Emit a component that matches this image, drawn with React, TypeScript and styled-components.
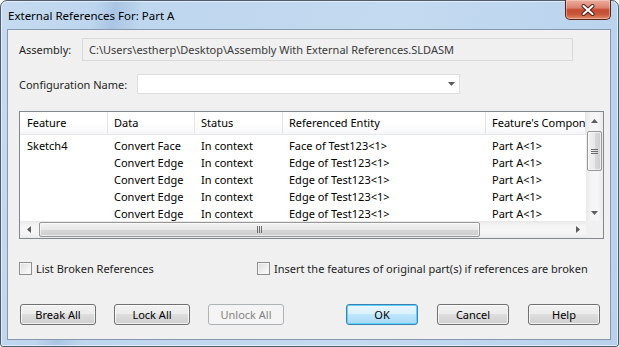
import styled, { createGlobalStyle } from 'styled-components'

const GlobalStyle = createGlobalStyle`
  html, body {
    margin: 0;
    padding: 0;
    background: #ffffff;
  }
  body {
    font-family: 'Segoe UI', 'Noto Sans', sans-serif;
    font-size: 11px;
    color: #000000;
  }
  * {
    box-sizing: border-box;
  }
`

const Window = styled.div`
  width: 619px;
  height: 347px;
  display: flex;
  flex-direction: column;
  padding: 0 7px 6px 6px;
  border: 1px solid #4f5d6e;
  border-radius: 7px 7px 3px 3px;
  background: linear-gradient(100deg, #c6dbf1 0%, #bdd5ee 14%, #a9c5e4 17%, #bed6ee 21%, #c3daf0 60%, #b8d2ed 100%);
  box-shadow: inset 0 0 0 1px rgba(255, 255, 255, 0.55);
`

const TitleBar = styled.div`
  height: 28px;
  display: flex;
  justify-content: space-between;
  align-items: flex-start;
`

const Title = styled.div`
  padding: 7px 0 0 1px;
  line-height: 16px;
  font-size: 11.5px;
  color: #000000;
`

const CloseButton = styled.div`
  width: 46px;
  height: 20px;
  margin-top: -1px;
  display: flex;
  align-items: center;
  justify-content: center;
  border: 1px solid #5e2218;
  border-top: none;
  border-radius: 0 0 5px 5px;
  background: linear-gradient(180deg, #ebae9f 0%, #dc8470 40%, #c54a31 52%, #c85639 75%, #dd8c6b 100%);
  box-shadow: inset 0 0 0 1px rgba(255, 220, 210, 0.45);
`

const Client = styled.div`
  flex: 1;
  display: flex;
  flex-direction: column;
  padding: 8px 10px 0 11px;
  background: #f0f0f0;
  border: 1px solid #8797ad;
`

const FieldRow = styled.div<{ $gap: number; $height: number }>`
  display: flex;
  align-items: center;
  height: ${p => p.$height}px;
  margin-top: ${p => p.$gap}px;
`

const Label = styled.div<{ $w: number }>`
  width: ${p => p.$w}px;
  flex: none;
  color: #1e1e1e;
  white-space: nowrap;
`

const ReadOnlyField = styled.div`
  width: 491px;
  height: 23px;
  padding-left: 6px;
  display: flex;
  align-items: center;
  background: #f0f0f0;
  border: 1px solid #d9d9d9;
  color: #3a3a3a;
  white-space: nowrap;
`

const Combo = styled.div`
  width: 323px;
  height: 20px;
  display: flex;
  align-items: center;
  justify-content: flex-end;
  padding-right: 4px;
  background: #ffffff;
  border: 1px solid #dedede;
`

const ListView = styled.div`
  margin-top: 17px;
  width: 585px;
  height: 128px;
  display: grid;
  grid-template-columns: 1fr 17px;
  grid-template-rows: 1fr 17px;
  background: #ffffff;
  border: 1px solid #828790;
`

const Table = styled.div`
  overflow: hidden;
  min-width: 0;
`

const columns = '88px 87px 88px 203px 1fr'

const HeaderRow = styled.div`
  display: grid;
  grid-template-columns: ${columns};
  height: 23px;
  background: linear-gradient(180deg, #ffffff 0%, #ffffff 45%, #f6f7f9 100%);
  border-bottom: 1px solid #e6e8eb;
`

const HeaderCell = styled.div`
  padding-left: 6px;
  line-height: 22px;
  white-space: nowrap;
  overflow: hidden;
  border-right: 1px solid #e3e5e8;
  &:first-child {
    padding-left: 7px;
  }
`

const Body = styled.div`
  padding-top: 2px;
`

const Row = styled.div`
  display: grid;
  grid-template-columns: ${columns};
  height: 17px;
`

const Cell = styled.div`
  padding-left: 6px;
  line-height: 17px;
  white-space: nowrap;
  overflow: hidden;
  &:first-child {
    padding-left: 7px;
  }
`

const VScroll = styled.div`
  display: flex;
  flex-direction: column;
  background: linear-gradient(90deg, #e9e9e9 0%, #f5f5f5 30%, #f5f5f5 70%, #ebebeb 100%);
`

const HScroll = styled.div`
  display: flex;
  background: linear-gradient(180deg, #e9e9e9 0%, #f5f5f5 30%, #f5f5f5 70%, #ebebeb 100%);
`

const ArrowBox = styled.div`
  width: 17px;
  height: 17px;
  flex: none;
  display: flex;
  align-items: center;
  justify-content: center;
`

const Track = styled.div<{ $vertical?: boolean }>`
  flex: 1;
  display: flex;
  flex-direction: ${p => p.$vertical ? 'column' : 'row'};
`

const Thumb = styled.div<{ $vertical?: boolean }>`
  display: flex;
  align-items: center;
  justify-content: center;
  border: 1px solid #979797;
  border-radius: 2px;
  background: ${p => p.$vertical
    ? 'linear-gradient(90deg, #f3f3f3 0%, #e8e8e8 50%, #d8d8d8 51%, #cfcfcf 100%)'
    : 'linear-gradient(180deg, #f3f3f3 0%, #e8e8e8 50%, #d8d8d8 51%, #cfcfcf 100%)'};
  box-shadow: inset 0 0 0 1px rgba(255, 255, 255, 0.6);
  ${p => p.$vertical
    ? 'width: 15px; height: 40px; margin: 2px 1px 0;'
    : 'height: 15px; width: 441px; margin: 1px 0 0 2px;'}
`

const Corner = styled.div`
  background: #f0f0f0;
`

const CheckRow = styled.div`
  display: grid;
  grid-template-columns: 238px auto;
  height: 13px;
  margin-top: 22px;
`

const CheckItem = styled.label`
  display: flex;
  align-items: center;
  gap: 4px;
  white-space: nowrap;
  color: #1e1e1e;
`

const CheckBox = styled.span`
  width: 13px;
  height: 13px;
  flex: none;
  border: 1px solid #8e8f8f;
  background: linear-gradient(135deg, #dcdcdc 0%, #f4f4f4 70%, #fbfbfb 100%);
  box-shadow: inset 0 0 0 1px #f4f4f4;
`

const ButtonRow = styled.div`
  display: flex;
  justify-content: space-between;
  margin-top: 30px;
  padding-left: 1px;
`

const ButtonGroup = styled.div<{ $gap: number }>`
  display: flex;
  gap: ${p => p.$gap}px;
`

const Button = styled.button<{ $w: number; $primary?: boolean }>`
  width: ${p => p.$w}px;
  height: 21px;
  padding: 0;
  font: inherit;
  color: #000000;
  border: 1px solid ${p => p.$primary ? '#3c7fb1' : '#707070'};
  border-radius: 3px;
  background: ${p => p.$primary
    ? 'linear-gradient(180deg, #eaf6fd 0%, #d9f0fc 50%, #bee6fd 50%, #a7d9f5 100%)'
    : 'linear-gradient(180deg, #f2f2f2 0%, #ebebeb 50%, #dddddd 50%, #cfcfcf 100%)'};
  box-shadow: inset 0 0 0 1px ${p => p.$primary ? '#5fd3fb' : 'rgba(255, 255, 255, 0.75)'};
  &:disabled {
    color: #838383;
    border-color: #adb2b5;
    background: #f4f4f4;
    box-shadow: none;
  }
`

const Arrow = ({ dir }: { dir: 'up' | 'down' | 'left' | 'right' }): JSX.Element => {
  const points = {
    up: '0,4 3.5,0 7,4',
    down: '0,0 7,0 3.5,4',
    left: '4,0 4,7 0,3.5',
    right: '0,0 4,3.5 0,7'
  }[dir]
  const vertical = dir === 'up' || dir === 'down'
  return (
    <svg width={vertical ? 7 : 4} height={vertical ? 4 : 7}>
      <polygon points={points} fill="#5c5c5c" />
    </svg>
  )
}

const Grip = ({ vertical }: { vertical?: boolean }): JSX.Element => (
  vertical
    ? (
      <svg width="7" height="7">
        <path d="M0 1.5H7M0 3.5H7M0 5.5H7" stroke="#6d6d6d" strokeWidth="1" />
      </svg>
      )
    : (
      <svg width="7" height="7">
        <path d="M1.5 0V7M3.5 0V7M5.5 0V7" stroke="#6d6d6d" strokeWidth="1" />
      </svg>
      )
)

const headers = ['Feature', 'Data', 'Status', 'Referenced Entity', "Feature's Component"]

const rows = [
  ['Sketch4', 'Convert Face', 'In context', 'Face of Test123<1>', 'Part A<1>'],
  ['', 'Convert Edge', 'In context', 'Edge of Test123<1>', 'Part A<1>'],
  ['', 'Convert Edge', 'In context', 'Edge of Test123<1>', 'Part A<1>'],
  ['', 'Convert Edge', 'In context', 'Edge of Test123<1>', 'Part A<1>'],
  ['', 'Convert Edge', 'In context', 'Edge of Test123<1>', 'Part A<1>']
]

const App = (): JSX.Element => {
  return (
    <>
      <GlobalStyle />
      <Window>
        <TitleBar>
          <Title>External References For: Part A</Title>
          <CloseButton>
            <svg width="14" height="12" viewBox="0 0 14 12">
              <path d="M2.5 2L11.5 10M11.5 2L2.5 10" stroke="#4a1a12" strokeWidth="4" strokeLinecap="round" />
              <path d="M2.5 2L11.5 10M11.5 2L2.5 10" stroke="#ffffff" strokeWidth="2.2" strokeLinecap="round" />
            </svg>
          </CloseButton>
        </TitleBar>
        <Client>
          <FieldRow $gap={0} $height={23}>
            <Label $w={63}>Assembly:</Label>
            <ReadOnlyField>C:\Users\estherp\Desktop\Assembly With External References.SLDASM</ReadOnlyField>
          </FieldRow>
          <FieldRow $gap={13} $height={20}>
            <Label $w={118}>Configuration Name:</Label>
            <Combo><Arrow dir="down" /></Combo>
          </FieldRow>
          <ListView>
            <Table>
              <HeaderRow>
                {headers.map(h => <HeaderCell key={h}>{h}</HeaderCell>)}
              </HeaderRow>
              <Body>
                {rows.map((r, i) => (
                  <Row key={i}>
                    {r.map((c, j) => <Cell key={j}>{c}</Cell>)}
                  </Row>
                ))}
              </Body>
            </Table>
            <VScroll>
              <ArrowBox><Arrow dir="up" /></ArrowBox>
              <Track $vertical>
                <Thumb $vertical><Grip vertical /></Thumb>
              </Track>
              <ArrowBox><Arrow dir="down" /></ArrowBox>
            </VScroll>
            <HScroll>
              <ArrowBox><Arrow dir="left" /></ArrowBox>
              <Track>
                <Thumb><Grip /></Thumb>
              </Track>
              <ArrowBox><Arrow dir="right" /></ArrowBox>
            </HScroll>
            <Corner />
          </ListView>
          <CheckRow>
            <CheckItem><CheckBox />List Broken References</CheckItem>
            <CheckItem><CheckBox />Insert the features of original part(s) if references are broken</CheckItem>
          </CheckRow>
          <ButtonRow>
            <ButtonGroup $gap={18}>
              <Button $w={76}>Break All</Button>
              <Button $w={76}>Lock All</Button>
              <Button $w={76} disabled>Unlock All</Button>
            </ButtonGroup>
            <ButtonGroup $gap={19}>
              <Button $w={72} $primary>OK</Button>
              <Button $w={72}>Cancel</Button>
              <Button $w={72}>Help</Button>
            </ButtonGroup>
          </ButtonRow>
        </Client>
      </Window>
    </>
  )
}

export default App
